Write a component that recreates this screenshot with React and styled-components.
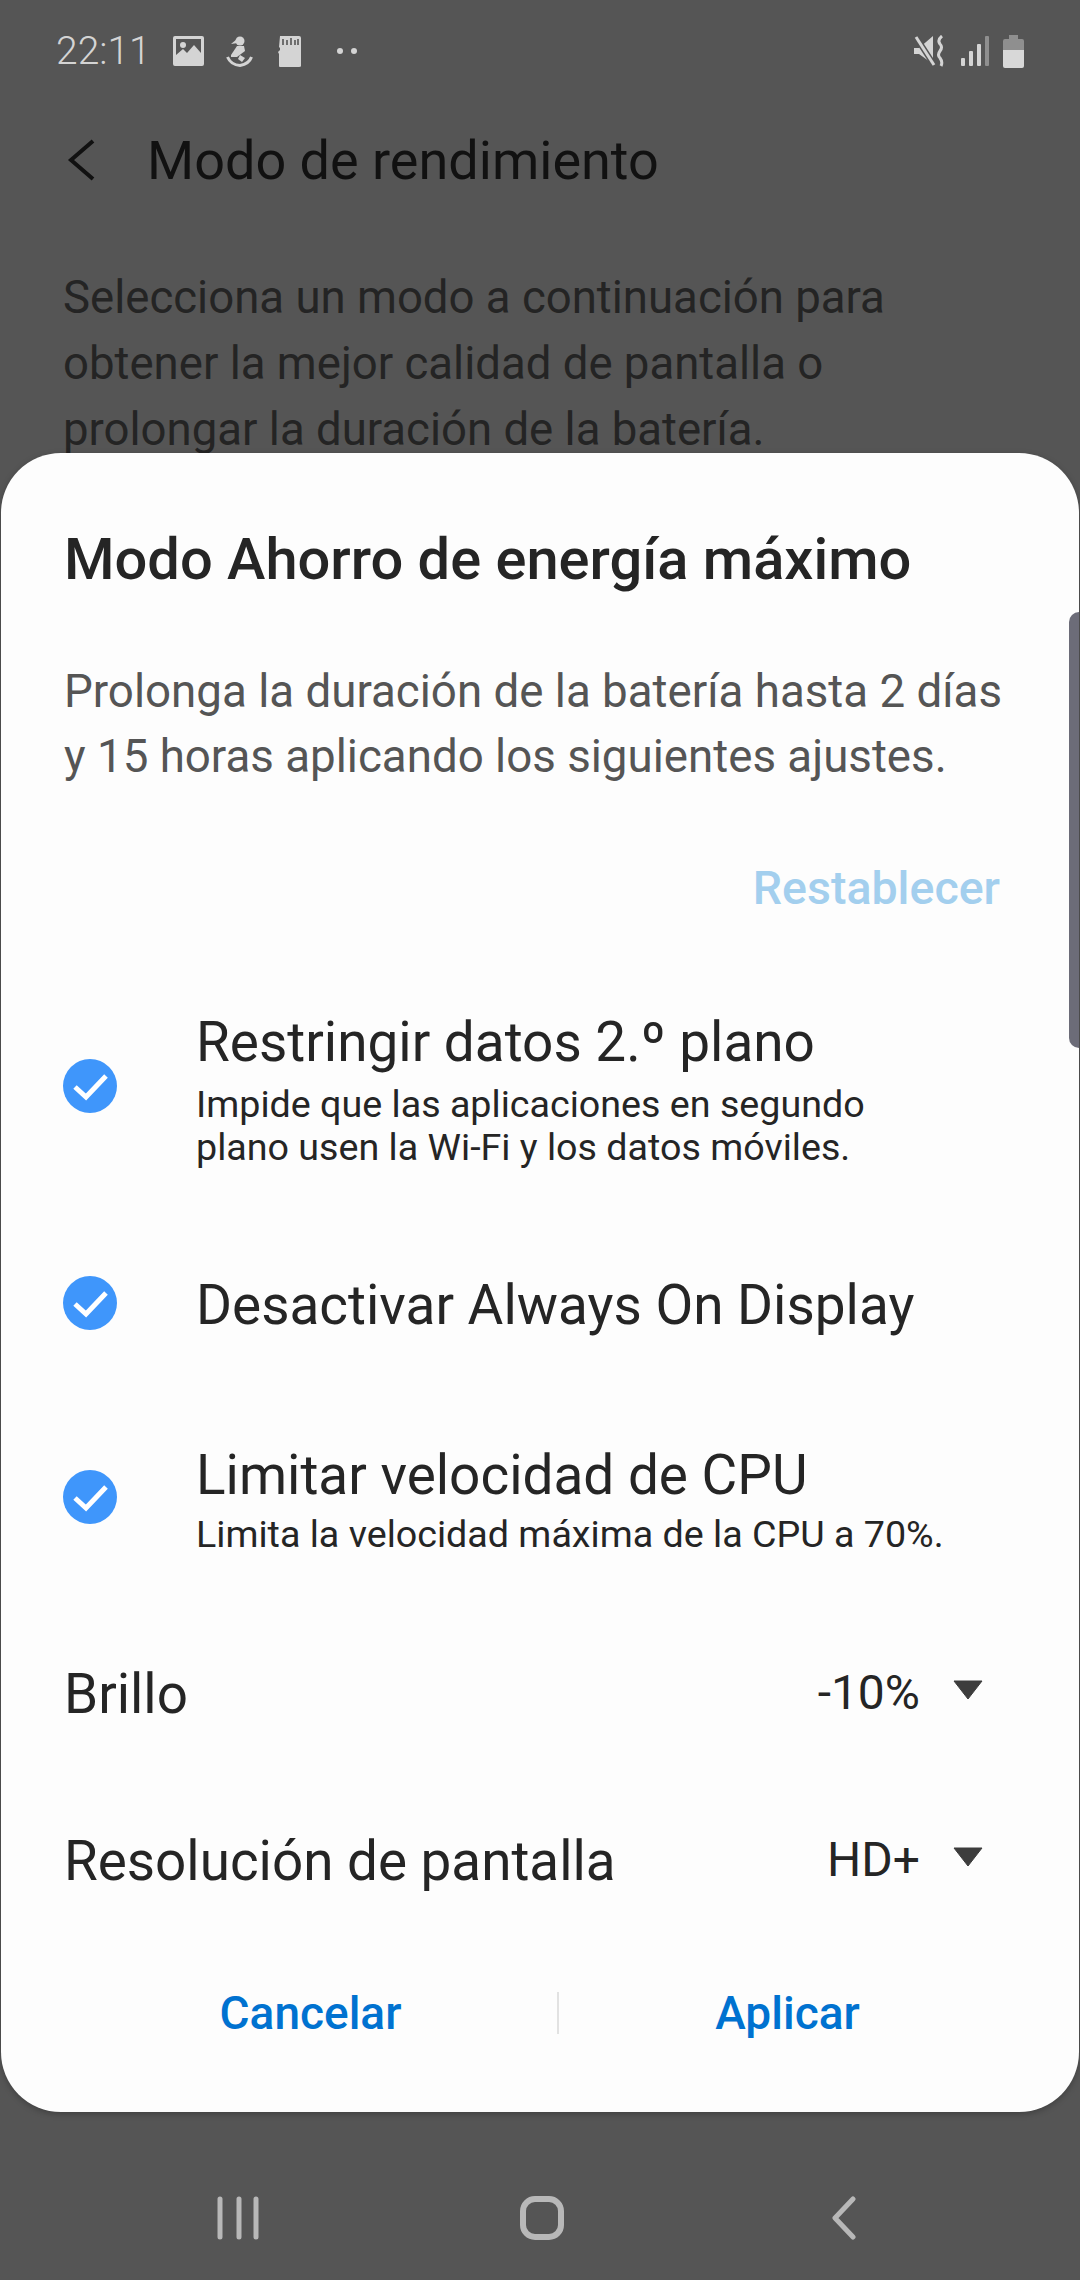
import React from "react";
import styled, { createGlobalStyle } from "styled-components";

const GlobalStyle = createGlobalStyle`
  html, body {
    margin: 0;
    padding: 0;
    background: #555555;
  }
  * {
    box-sizing: border-box;
  }
`;

const Screen = styled.div`
  position: relative;
  display: flex;
  flex-direction: column;
  width: 1080px;
  height: 2280px;
  overflow: hidden;
  background: #555555;
  font-family: Roboto, "Noto Sans", sans-serif;
`;

const StatusBar = styled.div`
  display: flex;
  align-items: center;
  height: 102px;
  padding: 0 56px 0 56px;
  color: #d4d4d4;
`;

const Clock = styled.span`
  width: 117px;
  font-size: 39px;
  font-weight: 300;
`;

const StatusGroup = styled.div`
  display: flex;
  align-items: center;
  gap: ${(p) => p.$gap}px;
  margin-left: ${(p) => (p.$right ? "auto" : "0")};
`;

const AppBar = styled.div`
  display: flex;
  align-items: center;
  height: 116px;
  padding-left: 67px;
`;

const AppTitle = styled.h1`
  margin: 0 0 0 50px;
  font-size: 54px;
  font-weight: 400;
  color: #111111;
`;

const Intro = styled.p`
  width: 900px;
  margin: 47px 0 0 63px;
  font-size: 45.55px;
  line-height: 66px;
  color: #242424;
`;

const Sheet = styled.section`
  position: absolute;
  top: 453px;
  left: 1px;
  width: 1078px;
  height: 1659px;
  padding: 71px 63px 70px;
  background: #fdfdfd;
  border-radius: 60px;
  box-shadow: 0 2px 6px rgba(0, 0, 0, 0.25);
`;

const SheetTitle = styled.h2`
  margin: 0;
  font-size: 57.8px;
  line-height: 70px;
  font-weight: 500;
  color: #252525;
`;

const SheetText = styled.p`
  margin: 65px 0 0;
  font-size: 45.7px;
  line-height: 65px;
  color: #555555;
`;

const ResetLink = styled.div`
  margin: 69px 0 0;
  padding-right: 16px;
  font-size: 46.5px;
  line-height: 60px;
  font-weight: 500;
  text-align: right;
  color: #a3cfee;
`;

const OptionList = styled.div`
  display: flex;
  flex-direction: column;
  margin-top: 94px;
`;

const Option = styled.div`
  display: flex;
  align-items: center;
  margin-top: ${(p) => p.$top || 0}px;
`;

const CheckMark = styled.svg`
  flex: none;
  width: 54px;
  height: 54px;
  margin: ${(p) => -p.$lift}px 79px 0 -1px;
`;

const OptionTitle = styled.div`
  font-size: 54.9px;
  line-height: 60px;
  color: #252525;
`;

const OptionNote = styled.div`
  margin-top: ${(p) => p.$top}px;
  font-size: 37.65px;
  line-height: 43px;
  color: #252525;
`;

const SelectRow = styled.div`
  display: flex;
  align-items: center;
  height: 60px;
  margin-top: ${(p) => p.$top}px;
  padding-right: 32px;
  font-size: 54.8px;
  color: #252525;
`;

const SelectValue = styled.span`
  margin: 0 0 3px auto;
  font-size: 48px;
`;

const Caret = styled.svg`
  width: 32px;
  height: 20px;
  margin: 0 0 8px 32px;
`;

const ButtonRow = styled.div`
  display: grid;
  grid-template-columns: 493px 2px 1fr;
  align-items: center;
  height: 60px;
  margin-top: 92px;
`;

const DialogButton = styled.div`
  font-size: 46px;
  font-weight: 500;
  text-align: center;
  color: #0072d0;
`;

const ButtonDivider = styled.div`
  height: 42px;
  background: #e2e2e2;
`;

const NavBar = styled.div`
  display: flex;
  align-items: center;
  margin-top: auto;
  height: 168px;
  padding: 44px 0 0 217px;
`;

const NavIcon = styled.svg`
  height: 44px;
  width: ${(p) => p.$w}px;
  margin-left: ${(p) => p.$left || 0}px;
  fill: none;
  stroke: #b8b8b8;
  stroke-width: 5;
  stroke-linecap: round;
  stroke-linejoin: round;
`;

const EdgeHandle = styled.div`
  position: absolute;
  top: 612px;
  right: 1px;
  width: 10px;
  height: 436px;
  background: #6c6c78;
  border-radius: 10px 0 0 10px;
`;

function Check({ lift }) {
  return (
    <CheckMark $lift={lift} viewBox="0 0 54 54">
      <circle cx="27" cy="27" r="27" fill="#3f96fb" />
      <path d="M12 28 L23 38 L43 17" fill="none" stroke="#fff" strokeWidth="5" />
    </CheckMark>
  );
}

function DownCaret() {
  return (
    <Caret viewBox="0 0 32 20">
      <path d="M2 1 H30 L16 19 Z" fill="#3d3d3d" stroke="#3d3d3d" strokeWidth="1" />
    </Caret>
  );
}

export default function App() {
  return (
    <>
      <GlobalStyle />
      <Screen>
        <StatusBar>
          <Clock>22:11</Clock>
          <StatusGroup $gap={22}>
            <svg width="31" height="30" viewBox="0 0 31 30">
              <path
                fillRule="evenodd"
                d="M2 0 H29 Q31 0 31 2 V28 Q31 30 29 30 H2 Q0 30 0 28 V2 Q0 0 2 0 Z M3 3 V19 L10 13 L14 17 L21 9 L28 17 V3 Z"
                fill="#d4d4d4"
              />
              <circle cx="10" cy="9" r="3" fill="#d4d4d4" />
            </svg>
            <svg width="27" height="31" viewBox="0 0 27 31">
              <circle cx="14" cy="5" r="4.5" fill="#d4d4d4" />
              <path d="M5 8 L11 3 L12 7 Z" fill="#d4d4d4" />
              <path d="M11 10 H18 L19 15 L11 21 L5 21 L5 19 Z" fill="#d4d4d4" />
              <path
                d="M1.5 21 Q5 29 14 29.5 Q23 28 25.5 21"
                fill="none"
                stroke="#d4d4d4"
                strokeWidth="3"
              />
              <path d="M14 19 L19 22 L16 26 L12 23 Z" fill="#d4d4d4" />
            </svg>
            <svg width="23" height="31" viewBox="0 0 23 31" style={{ marginLeft: 3 }}>
              <path
                fillRule="evenodd"
                d="M2 0 H21 Q23 0 23 2 V30 Q23 31 21 31 H2 Q1 31 1 30 V18 L0 16 L2 14 V12 L1 11 Z"
                fill="#d4d4d4"
              />
              <path
                d="M5 3 V9 M9 4 V9 M13 2 V9 M17 4 V9 M20 3 V9"
                stroke="#555555"
                strokeWidth="1.6"
              />
            </svg>
            <svg width="22" height="6" viewBox="0 0 22 6" style={{ marginLeft: 14 }}>
              <circle cx="3" cy="3" r="3" fill="#d4d4d4" />
              <circle cx="17" cy="3" r="3" fill="#d4d4d4" />
            </svg>
          </StatusGroup>
          <StatusGroup $right $gap={14}>
            <svg width="30" height="32" viewBox="0 0 30 32" style={{ marginRight: 3 }}>
              <path d="M0 13 H5 L19 1 V29 L5 19 H0 Z" fill="#d4d4d4" />
              <path d="M2 2 L20 30" stroke="#555555" strokeWidth="6" />
              <path d="M2 2 L20 30" stroke="#d4d4d4" strokeWidth="3" />
              <path
                d="M28 1 Q23 5 26 9 Q29 12 26 16 Q23 20 26 23 Q29 27 27 31"
                fill="none"
                stroke="#d4d4d4"
                strokeWidth="3"
              />
            </svg>
            <svg width="28" height="30" viewBox="0 0 28 30">
              <rect x="0" y="22" width="4" height="8" rx="1" fill="#d4d4d4" />
              <rect x="8" y="15" width="4" height="15" rx="1" fill="#d4d4d4" />
              <rect x="16" y="8" width="4" height="22" rx="1" fill="#d4d4d4" />
              <rect x="24" y="0" width="4" height="30" rx="1" fill="#8f8f8f" />
            </svg>
            <svg width="21" height="33" viewBox="0 0 21 33">
              <path d="M6 0 H15 V4 H19 Q21 4 21 6 V15 H0 V6 Q0 4 2 4 H6 Z" fill="#8f8f8f" />
              <path d="M0 15 H21 V31 Q21 33 19 33 H2 Q0 33 0 31 Z" fill="#d8d8d8" />
            </svg>
          </StatusGroup>
        </StatusBar>

        <AppBar>
          <svg width="30" height="42" viewBox="0 0 30 42">
            <path d="M26 2 L4 21 L26 40" fill="none" stroke="#111" strokeWidth="4" />
          </svg>
          <AppTitle>Modo de rendimiento</AppTitle>
        </AppBar>

        <Intro>
          Selecciona un modo a continuación para obtener la mejor calidad de
          pantalla o prolongar la duración de la batería.
        </Intro>

        <Sheet>
          <SheetTitle>Modo Ahorro de energía máximo</SheetTitle>
          <SheetText>
            Prolonga la duración de la batería hasta 2 días y 15 horas
            aplicando los siguientes ajustes.
          </SheetText>
          <ResetLink>Restablecer</ResetLink>

          <OptionList>
            <Option>
              <Check lift={9} />
              <div>
                <OptionTitle>Restringir datos 2.º plano</OptionTitle>
                <OptionNote $top={11}>
                  Impide que las aplicaciones en segundo
                  <br />
                  plano usen la Wi-Fi y los datos móviles.
                </OptionNote>
              </div>
            </Option>
            <Option $top={106}>
              <Check lift={4} />
              <OptionTitle>Desactivar Always On Display</OptionTitle>
            </Option>
            <Option $top={110}>
              <Check lift={8} />
              <div>
                <OptionTitle>Limitar velocidad de CPU</OptionTitle>
                <OptionNote $top={8}>Limita la velocidad máxima de la CPU a 70%.</OptionNote>
              </div>
            </Option>
          </OptionList>

          <SelectRow $top={108}>
            Brillo
            <SelectValue>-10%</SelectValue>
            <DownCaret />
          </SelectRow>
          <SelectRow $top={107}>
            Resolución de pantalla
            <SelectValue>HD+</SelectValue>
            <DownCaret />
          </SelectRow>

          <ButtonRow>
            <DialogButton>Cancelar</DialogButton>
            <ButtonDivider />
            <DialogButton>Aplicar</DialogButton>
          </ButtonRow>
        </Sheet>

        <NavBar>
          <NavIcon $w={44} viewBox="0 0 44 44">
            <path d="M3 3 V41 M22 3 V41 M39 3 V41" />
          </NavIcon>
          <NavIcon $w={44} $left={259} viewBox="0 0 44 44">
            <rect x="3" y="3" width="38" height="38" rx="12" strokeWidth="6" />
          </NavIcon>
          <NavIcon $w={28} $left={268} viewBox="0 0 28 44">
            <path d="M21 3 L3 22 L21 41" />
          </NavIcon>
        </NavBar>

        <EdgeHandle />
      </Screen>
    </>
  );
}
